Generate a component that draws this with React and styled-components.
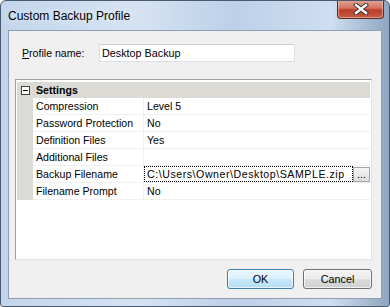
import styled, { createGlobalStyle } from 'styled-components';

const GlobalStyle = createGlobalStyle`
  html, body { margin: 0; padding: 0; background: #fff; }
  body { font-family: "Liberation Sans", Arial, sans-serif; }
`;

const rows = [
  { name: 'Compression', value: 'Level 5' },
  { name: 'Password Protection', value: 'No' },
  { name: 'Definition Files', value: 'Yes' },
  { name: 'Additional Files', value: '' },
  { name: 'Backup Filename', value: 'C:\\Users\\Owner\\Desktop\\SAMPLE.zip', selected: true },
  { name: 'Filename Prompt', value: 'No' },
];

const App = () => {
  return (
    <>
      <GlobalStyle />
      <Window>
        <TitleBar>
          <Title>Custom Backup Profile</Title>
          <CloseButton>
            <svg width="16" height="12" viewBox="0 0 16 12">
              <path d="M3 2 L13 10 M13 2 L3 10" stroke="#3b2a2a" strokeWidth="4.2" strokeLinecap="square" />
              <path d="M3 2 L13 10 M13 2 L3 10" stroke="#fff" strokeWidth="2.4" strokeLinecap="square" />
            </svg>
          </CloseButton>
        </TitleBar>
        <Client>
          <NameRow>
            <Label><u>P</u>rofile name:</Label>
            <NameInput>Desktop Backup</NameInput>
          </NameRow>

          <Grid>
            <Category>
              <Margin>
                <Toggle />
              </Margin>
              <CategoryText>Settings</CategoryText>
            </Category>
            {rows.map((row) => (
              <Row key={row.name}>
                <Margin />
                <NameCell>{row.name}</NameCell>
                {row.selected ? (
                  <EditCell>
                    <EditBox>{row.value}</EditBox>
                    <Ellipsis>...</Ellipsis>
                  </EditCell>
                ) : (
                  <ValueCell>{row.value}</ValueCell>
                )}
              </Row>
            ))}
          </Grid>

          <Buttons>
            <Button $primary>OK</Button>
            <Button>Cancel</Button>
          </Buttons>
        </Client>
      </Window>
    </>
  );
};

const Window = styled.div`
  width: 390px;
  height: 307px;
  box-sizing: border-box;
  display: flex;
  flex-direction: column;
  border: 1px solid #4a5a6e;
  border-radius: 6px 6px 3px 3px;
  background: linear-gradient(90deg, #c2d5ec 0%, #d6e3f3 35%, #bcd0e8 60%, #cfdef1 85%, #8fa6c0 100%);
  overflow: hidden;
`;

const TitleBar = styled.div`
  height: 29px;
  display: flex;
  align-items: flex-start;
  justify-content: space-between;
  padding: 0 5px 0 7px;
`;

const Title = styled.div`
  font-size: 12px;
  color: #000;
  line-height: 12px;
  margin-top: 9px;
  text-shadow: 0 0 6px rgba(255, 255, 255, 0.9);
`;

const CloseButton = styled.div`
  width: 47px;
  height: 19px;
  margin-top: -1px;
  box-sizing: border-box;
  border: 1px solid #5c2a25;
  border-top: none;
  border-radius: 0 0 4px 4px;
  background: linear-gradient(#e6a598 0%, #d3735f 45%, #b9402a 55%, #c75a43 100%);
  display: flex;
  align-items: center;
  justify-content: center;
  box-shadow: inset 0 0 0 1px rgba(255, 220, 210, 0.5);
`;

const Client = styled.div`
  flex: 1;
  margin: 0 7px 7px 7px;
  border: 1px solid #8e9db0;
  background: #f0f0f0;
  display: flex;
  flex-direction: column;
  padding: 13px 9px 0 6px;
  font-size: 10.6px;
  color: #000;
`;

const NameRow = styled.div`
  display: flex;
  align-items: center;
  height: 18px;
`;

const Label = styled.div`
  width: 77px;
  padding-left: 7px;
`;

const NameInput = styled.div`
  width: 196px;
  height: 18px;
  box-sizing: border-box;
  background: #fff;
  border: 1px solid #dcdfe3;
  border-top-color: #c9ced4;
  padding-left: 2px;
  line-height: 16px;
  font-size: 10.8px;
`;

const Grid = styled.div`
  margin-top: 17px;
  height: 181px;
  box-sizing: border-box;
  background: #fff;
  border: 1px solid #a0a0a0;
  border-right-color: #e3e3e3;
  border-bottom-color: #e3e3e3;
  padding: 2px 1px 0 1px;
`;

const Category = styled.div`
  display: flex;
  height: 16px;
  background: #dcdad5;
  align-items: center;
`;

const Margin = styled.div`
  width: 16px;
  align-self: stretch;
  background: #dcdad5;
  display: flex;
  align-items: center;
  justify-content: center;
`;

const Toggle = styled.div`
  width: 9px;
  height: 9px;
  box-sizing: border-box;
  border: 1px solid #404040;
  background: #fff;
  position: relative;
  &::after {
    content: '';
    position: absolute;
    left: 1px;
    top: 3px;
    width: 5px;
    height: 1px;
    background: #000;
  }
`;

const CategoryText = styled.div`
  font-weight: bold;
  padding-left: 3px;
`;

const Row = styled.div`
  display: flex;
  height: 17px;
`;

const NameCell = styled.div`
  width: 107px;
  padding-left: 3px;
  border-right: 1px solid #f0f0f0;
  border-bottom: 1px solid #f0f0f0;
  line-height: 16px;
  white-space: nowrap;
  overflow: hidden;
`;

const ValueCell = styled.div`
  flex: 1;
  padding-left: 3px;
  border-bottom: 1px solid #f0f0f0;
  line-height: 16px;
`;

const EditCell = styled.div`
  flex: 1;
  display: flex;
  border-bottom: 1px solid #f0f0f0;
`;

const EditBox = styled.div`
  flex: 1;
  border: 1px dotted #000;
  padding-left: 2px;
  line-height: 15px;
  letter-spacing: 0.55px;
  white-space: nowrap;
  overflow: hidden;
`;

const Ellipsis = styled.div`
  width: 17px;
  height: 15px;
  margin: 1px 0 0 0;
  box-sizing: border-box;
  border: 1px solid #a5a5a5;
  background: linear-gradient(#f6f6f6, #dedede);
  text-align: center;
  line-height: 13px;
  font-size: 11px;
`;

const Buttons = styled.div`
  display: flex;
  justify-content: flex-end;
  gap: 9px;
  margin-top: 9px;
`;

const Button = styled.div`
  width: ${(p) => (p.$primary ? '67px' : '69px')};
  height: 20px;
  box-sizing: border-box;
  border-radius: 3px;
  border: 1px solid ${(p) => (p.$primary ? '#3c7fb1' : '#707070')};
  background: ${(p) =>
    p.$primary
      ? 'linear-gradient(#eaf6fd 0%, #dcf1fc 50%, #c6e8fb 50%, #b4ddf3 100%)'
      : 'linear-gradient(#f2f2f2 0%, #ebebeb 50%, #dddddd 50%, #cfcfcf 100%)'};
  box-shadow: inset 0 0 0 1px rgba(255, 255, 255, 0.7);
  display: flex;
  align-items: center;
  justify-content: center;
  font-size: 10.8px;
`;

export default App;
